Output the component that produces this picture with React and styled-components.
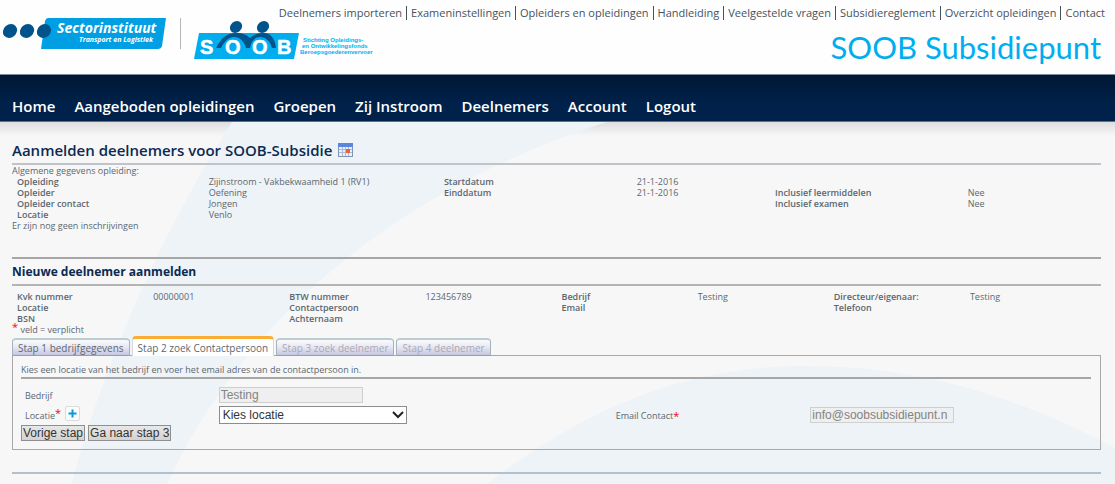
import React from 'react';
import styled, { createGlobalStyle } from 'styled-components';

const GlobalStyle = createGlobalStyle`
  * {
    box-sizing: border-box;
  }
  body {
    margin: 0;
    background: #f7f7f7;
    color: #5b6770;
    font-family: 'Open Sans', 'Noto Sans', sans-serif;
    font-size: 9px;
    line-height: 11px;
  }
`;

const Page = styled.div`
  min-height: 100vh;
  display: flex;
  flex-direction: column;
`;

const Header = styled.header`
  display: grid;
  height: 75px;
  background: #fefefe;
  border-bottom: 1px solid #7d8b99;
  & > * {
    grid-area: 1 / 1;
  }
`;

const Logos = styled.svg`
  width: 380px;
  height: 74px;
`;

const HeaderRight = styled.div`
  display: flex;
  flex-direction: column;
  align-items: flex-end;
  justify-self: end;
  padding: 6px 10px 0 0;
`;

const TopLinks = styled.nav`
  display: flex;
  white-space: nowrap;
`;

const TopLink = styled.a`
  color: #46525c;
  font-size: 11px;
  line-height: 14px;
  text-decoration: none;
  & + & {
    margin-left: 4px;
    padding-left: 4px;
    border-left: 1px solid #46525c;
  }
`;

const SiteName = styled.div`
  margin-right: 4px;
  color: #00aeef;
  font-family: Lato, sans-serif;
  font-size: 31px;
  line-height: 54px;
`;

const MainNav = styled.nav`
  display: flex;
  gap: 19px;
  height: 47px;
  padding: 19px 12px 0;
  background: linear-gradient(#001833, #00214a 60%);
  border-bottom: 1px solid #5f7084;
`;

const NavLink = styled.a`
  color: #fff;
  font-size: 15px;
  font-weight: 600;
  line-height: 24px;
  text-decoration: none;
`;

const Main = styled.main`
  position: relative;
  z-index: 0;
  flex: 1;
  padding: 19px 14px 0 12px;
  background: linear-gradient(rgba(0, 0, 0, 0.1), rgba(0, 0, 0, 0) 14px);
`;

const Backdrop = styled.svg`
  position: absolute;
  z-index: -1;
  top: 0;
  left: 0;
  width: 100%;
  height: 362px;
`;

const Title = styled.h1`
  display: flex;
  align-items: center;
  gap: 6px;
  height: 24px;
  margin: 0;
  padding-bottom: 4px;
  border-bottom: 2px solid #bfc4ca;
  color: #0b2a52;
  font-size: 15px;
  font-weight: 600;
  line-height: 18px;
`;

const SubTitle = styled.h2`
  margin: 0;
  color: #0b2a52;
  font-size: 12px;
  font-weight: 700;
  line-height: 25px;
`;

const Line = styled.hr`
  height: 2px;
  margin: 0;
  border: 0;
  background: ${(props) => props.$color || '#b4b4b4'};
`;

const SectionLine = styled(Line)`
  margin-top: 26px;
`;

const FooterLine = styled(Line)`
  margin-top: 22px;
`;

const Text = styled.p`
  margin: 0;
  line-height: ${(props) => props.$height || 11}px;
`;

const Star = styled.span`
  color: #f00;
  font-size: 11px;
  vertical-align: 2px;
  line-height: 1px;
`;

const InfoTable = styled.table`
  width: 100%;
  table-layout: fixed;
  border-collapse: collapse;
  margin: ${(props) => props.$margin || 0};
`;

const Label = styled.th`
  height: 11px;
  padding: 0 0 0 5px;
  font-weight: 600;
  text-align: left;
  white-space: nowrap;
`;

const Value = styled.td`
  height: 11px;
  padding: 0 0 0 5px;
  white-space: nowrap;
`;

const Tabs = styled.div`
  display: flex;
  align-items: flex-end;
  gap: 2px;
  height: 20px;
  margin-bottom: -1px;
`;

const Tab = styled.button`
  height: ${(props) => (props.$active ? 20 : 18)}px;
  padding: 0 5px;
  border: 1px solid #a3b5ba;
  border-top: 2px solid #bccdd1;
  border-bottom-color: #9c9cb0;
  border-radius: 4px 4px 0 0;
  background: linear-gradient(#fbfbfd, #e6e6f3 50%, #c5c5e0);
  color: #5b6770;
  font: 10px/14px 'Open Sans', sans-serif;
  white-space: nowrap;
  &:disabled {
    color: #a9a9b3;
  }
  ${(props) =>
    props.$active
      ? `
    border-color: #d5dadd;
    border-top: 3px solid #f9ad35;
    border-bottom: 0;
    background: #fff;
  `
      : null}
`;

const Panel = styled.section`
  height: 95px;
  padding: 7px 9px 0 8px;
  border: 1px solid #a9a9a9;
`;

const Fields = styled.div`
  display: grid;
  grid-template-columns: 18.1% 37.1% 18.2% 1fr;
  grid-template-rows: 20px 20px;
  align-items: center;
  margin-top: 6px;
`;

const Cell = styled.div`
  display: flex;
  align-items: center;
  padding-left: 4px;
`;

const Field = styled.input`
  width: 144px;
  height: 16px;
  padding: 0 1px;
  border: 1px solid #cfcfcf;
  background: #efefef;
  color: #838383;
  font: 12px/14px 'Liberation Sans', Arial, sans-serif;
`;

const SelectWrap = styled.div`
  display: grid;
  align-items: center;
  width: 188px;
  & > * {
    grid-area: 1 / 1;
  }
  svg {
    justify-self: end;
    margin-right: 3px;
    pointer-events: none;
  }
`;

const Select = styled.select`
  appearance: none;
  height: 18px;
  padding: 0 3px;
  border: 1px solid #8c8c8c;
  border-radius: 0;
  background: #fff;
  color: #333;
  font: 12px/16px 'Liberation Sans', Arial, sans-serif;
`;

const AddButton = styled.button`
  display: flex;
  align-items: center;
  justify-content: center;
  width: 15px;
  height: 15px;
  margin: 0 0 4px 4px;
  padding: 0;
  border: 1px solid #d9dde0;
  border-radius: 2px;
  background: #fcfcfc;
`;

const Buttons = styled.div`
  display: flex;
  gap: 3px;
`;

const StepButton = styled.button`
  height: 16px;
  padding: 0 1px;
  border: 1px solid #8f8f8f;
  background: linear-gradient(#e8e8e8, #d2d2d2);
  color: #333;
  font: 12px/14px 'Liberation Sans', Arial, sans-serif;
`;

const topLinks = [
  'Deelnemers importeren',
  'Exameninstellingen',
  'Opleiders en opleidingen',
  'Handleiding',
  'Veelgestelde vragen',
  'Subsidiereglement',
  'Overzicht opleidingen',
  'Contact',
];

const navLinks = [
  'Home',
  'Aangeboden opleidingen',
  'Groepen',
  'Zij Instroom',
  'Deelnemers',
  'Account',
  'Logout',
];

const courseWidths = ['17.6%', '21.6%', '17.7%', '12.7%', '17.7%', '12.7%'];
const course = [
  ['Opleiding', 'Zijinstroom - Vakbekwaamheid 1 (RV1)', 'Startdatum', '21-1-2016', '', ''],
  ['Opleider', 'Oefening', 'Einddatum', '21-1-2016', 'Inclusief leermiddelen', 'Nee'],
  ['Opleider contact', 'Jongen', '', '', 'Inclusief examen', 'Nee'],
  ['Locatie', 'Venlo', '', '', '', ''],
];

const personWidths = Array(8).fill('12.5%');
const person = [
  ['Kvk nummer', '00000001', 'BTW nummer', '123456789', 'Bedrijf', 'Testing', 'Directeur/eigenaar:', 'Testing'],
  ['Locatie', '', 'Contactpersoon', '', 'Email', '', 'Telefoon', ''],
  ['BSN', '', 'Achternaam', '', '', '', '', ''],
];

const Info = ({ rows, widths, margin }) => (
  <InfoTable $margin={margin}>
    <colgroup>
      {widths.map((width, i) => (
        <col key={i} width={width} />
      ))}
    </colgroup>
    <tbody>
      {rows.map((row) => (
        <tr key={row[0]}>
          {row.map((text, i) =>
            i % 2 === 0 && text ? (
              <Label key={i} scope="row">{text}</Label>
            ) : (
              <Value key={i}>{text}</Value>
            )
          )}
        </tr>
      ))}
    </tbody>
  </InfoTable>
);

const HeaderLogos = () => (
  <Logos viewBox="0 0 380 74" fontFamily="'Open Sans', sans-serif">
    <path d="M48 18H166L162 46Q161 49 158 49H41L45 21Q46 18 48 18Z" fill="#009fe3" />
    <g fill="#00548b">
      <ellipse cx="10" cy="31" rx="7.5" ry="6.5" transform="rotate(-40 10 31)" />
      <ellipse cx="27" cy="31" rx="7.5" ry="6.5" transform="rotate(-40 27 31)" />
      <ellipse cx="44" cy="31" rx="7.5" ry="6.5" transform="rotate(-40 44 31)" />
    </g>
    <text x="57" y="33" fontSize="14" fontWeight="700" fontStyle="italic" fill="#fff">Sectorinstituut</text>
    <text x="79" y="42" fontSize="7" fontWeight="700" fontStyle="italic" fill="#fff">Transport en Logistiek</text>
    <path d="M180.500 18V49" stroke="#b5b5b5" />
    <path d="M199 33H299L294 59H194Z" fill="#00aeef" />
    <g fill="#00548b">
      <path d="M216 48C221 38 227 33 236 33C243 33 247 35 250 38C253 35 257 33 264 33C271 33 275 39 276 48L272 48C270 41 266 37 260 37C254 37 251 42 250 48L246 48C244 41 240 37 234 37C228 37 224 42 221 48Z" />
      <ellipse cx="236" cy="27" rx="6.5" ry="5.5" transform="rotate(-40 236 27)" />
      <ellipse cx="263" cy="27" rx="6.5" ry="5.5" transform="rotate(-40 263 27)" />
    </g>
    <g
      fill="#fff"
      stroke="#fff"
      strokeWidth="0.5"
      fontFamily="'Liberation Sans', Arial, sans-serif"
      fontSize="20"
      fontWeight="700"
    >
      <text x="200" y="54">S</text>
      <text x="225" y="54">O</text>
      <text x="252" y="54">O</text>
      <text x="277" y="54">B</text>
    </g>
    <g fill="#00aeef" fontFamily="'Liberation Sans', Arial, sans-serif" fontSize="6" fontWeight="700">
      <text x="303" y="42">Stichting Opleidings-</text>
      <text x="302" y="48">en Ontwikkelingsfonds</text>
      <text x="300" y="54">Beroepsgoederenvervoer</text>
    </g>
  </Logos>
);

const CalendarIcon = () => (
  <svg width="15" height="14" viewBox="0 0 15 14">
    <rect x="0.5" y="0.5" width="14" height="13" fill="#e9f0fb" stroke="#8295b5" />
    <rect x="0" y="0" width="15" height="4" fill="#5c86dc" />
    <path d="M1 6.500H14M1 9.500H14M4.500 4V13M7.500 4V13M10.500 4V13" stroke="#a9b9d6" />
    <rect x="8" y="6" width="4" height="4" fill="#e8633a" />
  </svg>
);

const App = () => (
  <Page>
    <GlobalStyle />
    <Header>
      <HeaderLogos />
      <HeaderRight>
        <TopLinks>
          {topLinks.map((text) => (
            <TopLink key={text} href="#">{text}</TopLink>
          ))}
        </TopLinks>
        <SiteName>SOOB Subsidiepunt</SiteName>
      </HeaderRight>
    </Header>
    <MainNav>
      {navLinks.map((text) => (
        <NavLink key={text} href="#">{text}</NavLink>
      ))}
    </MainNav>
    <Main>
      <Backdrop viewBox="0 0 1115 362" preserveAspectRatio="none" fill="#edf3f7">
        <path d="M232 0C165 105 105 235 72 362H167C235 215 375 75 607 0Z" />
        <path d="M487 362C600 275 700 244 805 244C910 244 1010 270 1115 326V362Z" />
      </Backdrop>
      <Title>
        Aanmelden deelnemers voor SOOB-Subsidie
        <CalendarIcon />
      </Title>
      <Text>Algemene gegevens opleiding:</Text>
      <Info rows={course} widths={courseWidths} />
      <Text>Er zijn nog geen inschrijvingen</Text>
      <SectionLine $color="#a6a6a6" />
      <SubTitle>Nieuwe deelnemer aanmelden</SubTitle>
      <Line />
      <Info rows={person} widths={personWidths} margin="5px 0 0" />
      <Text $height={12}>
        <Star>*</Star> veld = verplicht
      </Text>
      <Tabs role="tablist">
        <Tab role="tab">Stap 1 bedrijfgegevens</Tab>
        <Tab role="tab" aria-selected="true" $active>Stap 2 zoek Contactpersoon</Tab>
        <Tab role="tab" disabled>Stap 3 zoek deelnemer</Tab>
        <Tab role="tab" disabled>Stap 4 deelnemer</Tab>
      </Tabs>
      <Panel>
        <Text $height={14}>
          Kies een locatie van het bedrijf en voer het email adres van de contactpersoon in.
        </Text>
        <Line $color="#a6a6a6" />
        <Fields>
          <Cell as="label" htmlFor="bedrijf">Bedrijf</Cell>
          <Cell>
            <Field id="bedrijf" defaultValue="Testing" disabled />
          </Cell>
          <Cell />
          <Cell />
          <Cell>
            <label htmlFor="locatie">Locatie<Star>*</Star></label>
            <AddButton aria-label="Locatie toevoegen">
              <svg width="9" height="9" viewBox="0 0 9 9">
                <path d="M4.500 0.500V8.500M0.500 4.500H8.500" stroke="#0a9bd6" strokeWidth="2" />
              </svg>
            </AddButton>
          </Cell>
          <Cell>
            <SelectWrap>
              <Select id="locatie">
                <option>Kies locatie</option>
              </Select>
              <svg width="12" height="8" viewBox="0 0 12 8">
                <path d="M1 1L6 6L11 1" fill="none" stroke="#222" strokeWidth="2" />
              </svg>
            </SelectWrap>
          </Cell>
          <Cell as="label" htmlFor="email">Email Contact<Star>*</Star></Cell>
          <Cell>
            <Field id="email" defaultValue="info@soobsubsidiepunt.n" disabled />
          </Cell>
        </Fields>
        <Buttons>
          <StepButton>Vorige stap</StepButton>
          <StepButton>Ga naar stap 3</StepButton>
        </Buttons>
      </Panel>
      <FooterLine $color="#b3c0ce" />
    </Main>
  </Page>
);

export default App;
